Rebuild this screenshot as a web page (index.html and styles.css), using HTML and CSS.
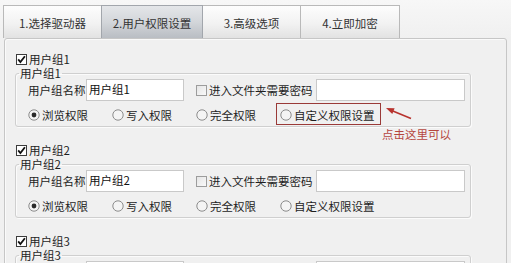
FILE: index.html
```html
<!DOCTYPE html>
<html>
<head>
<meta charset="utf-8">
<link rel="stylesheet" href="styles.css">
</head>
<body>
<div class="tabs">
  <div class="tab">1.选择驱动器</div>
  <div class="tab active">2.用户权限设置</div>
  <div class="tab">3.高级选项</div>
  <div class="tab">4.立即加密</div>
</div>
<div class="panel">
  <div class="group">
    <div class="gcheck"><svg class="cb" width="11" height="11" viewBox="0 0 11 11"><rect x="0.5" y="0.5" width="10" height="10" fill="#fff" stroke="#3c3c3c"/><path d="M2.2 5.4 L4.4 8 L8.9 2.2" fill="none" stroke="#111" stroke-width="1.8"/></svg><span>用户组1</span></div>
    <fieldset class="gbox">
      <legend>用户组1</legend>
      <div class="row1">
        <span class="lbl">用户组名称</span>
        <span class="inp name">用户组1</span>
        <span class="chk"><svg width="11" height="11" viewBox="0 0 11 11"><defs><linearGradient id="g1" x1="0" y1="0" x2="1" y2="1"><stop offset="0" stop-color="#e4e4e4"/><stop offset="1" stop-color="#fafafa"/></linearGradient></defs><rect x="0.5" y="0.5" width="10" height="10" fill="url(#g1)" stroke="#9c9c9c"/></svg><span>进入文件夹需要密码</span></span>
        <span class="inp pwd"></span>
      </div>
      <div class="row2">
        <span class="radio"><svg width="12" height="12" viewBox="0 0 12 12"><circle cx="6" cy="6" r="5.2" fill="#f4f4f4" stroke="#8c8c8c"/><circle cx="6" cy="6" r="2.4" fill="#2a2a2a"/></svg>浏览权限</span>
        <span class="radio"><svg width="12" height="12" viewBox="0 0 12 12"><circle cx="6" cy="6" r="5.2" fill="#f4f4f4" stroke="#8c8c8c"/></svg>写入权限</span>
        <span class="radio"><svg width="12" height="12" viewBox="0 0 12 12"><circle cx="6" cy="6" r="5.2" fill="#f4f4f4" stroke="#8c8c8c"/></svg>完全权限</span>
        <span class="radio last"><svg width="12" height="12" viewBox="0 0 12 12"><circle cx="6" cy="6" r="5.2" fill="#f4f4f4" stroke="#8c8c8c"/></svg>自定义权限设置</span>
      </div>
    </fieldset>
  </div>
  <div class="group">
    <div class="gcheck"><svg class="cb" width="11" height="11" viewBox="0 0 11 11"><rect x="0.5" y="0.5" width="10" height="10" fill="#fff" stroke="#3c3c3c"/><path d="M2.2 5.4 L4.4 8 L8.9 2.2" fill="none" stroke="#111" stroke-width="1.8"/></svg><span>用户组2</span></div>
    <fieldset class="gbox">
      <legend>用户组2</legend>
      <div class="row1">
        <span class="lbl">用户组名称</span>
        <span class="inp name">用户组2</span>
        <span class="chk"><svg width="11" height="11" viewBox="0 0 11 11"><rect x="0.5" y="0.5" width="10" height="10" fill="url(#g1)" stroke="#9c9c9c"/></svg><span>进入文件夹需要密码</span></span>
        <span class="inp pwd"></span>
      </div>
      <div class="row2">
        <span class="radio"><svg width="12" height="12" viewBox="0 0 12 12"><circle cx="6" cy="6" r="5.2" fill="#f4f4f4" stroke="#8c8c8c"/><circle cx="6" cy="6" r="2.4" fill="#2a2a2a"/></svg>浏览权限</span>
        <span class="radio"><svg width="12" height="12" viewBox="0 0 12 12"><circle cx="6" cy="6" r="5.2" fill="#f4f4f4" stroke="#8c8c8c"/></svg>写入权限</span>
        <span class="radio"><svg width="12" height="12" viewBox="0 0 12 12"><circle cx="6" cy="6" r="5.2" fill="#f4f4f4" stroke="#8c8c8c"/></svg>完全权限</span>
        <span class="radio last"><svg width="12" height="12" viewBox="0 0 12 12"><circle cx="6" cy="6" r="5.2" fill="#f4f4f4" stroke="#8c8c8c"/></svg>自定义权限设置</span>
      </div>
    </fieldset>
  </div>
  <div class="group">
    <div class="gcheck"><svg class="cb" width="11" height="11" viewBox="0 0 11 11"><rect x="0.5" y="0.5" width="10" height="10" fill="#fff" stroke="#3c3c3c"/><path d="M2.2 5.4 L4.4 8 L8.9 2.2" fill="none" stroke="#111" stroke-width="1.8"/></svg><span>用户组3</span></div>
    <fieldset class="gbox">
      <legend>用户组3</legend>
      <div class="row1">
        <span class="lbl">用户组名称</span>
        <span class="inp name">用户组3</span>
        <span class="chk"><svg width="11" height="11" viewBox="0 0 11 11"><rect x="0.5" y="0.5" width="10" height="10" fill="url(#g1)" stroke="#9c9c9c"/></svg><span>进入文件夹需要密码</span></span>
        <span class="inp pwd"></span>
      </div>
    </fieldset>
  </div>
  <div class="callout-box"></div>
  <svg class="arrow" width="30" height="22" viewBox="0 0 30 22"><line x1="26" y1="17.5" x2="6" y2="9.2" stroke="#b8332e" stroke-width="1.6"/><polygon points="1,7 9.6,7.3 7.3,12.9" fill="#b8332e"/></svg>
  <div class="callout-text">点击这里可以</div>
</div>
</body>
</html>
```

FILE: styles.css
```css
html, body {
  margin: 0;
  padding: 0;
}
body {
  background: #f0f0f0;
  font-family: "Noto Sans CJK SC", "Noto Sans", sans-serif;
  font-size: 11.5px;
  color: #1e1e1e;
  overflow: hidden;
  height: 263px;
}
svg {
  flex-shrink: 0;
  display: block;
}
.tabs {
  display: flex;
  height: 33px;
  padding-top: 5px;
  padding-left: 3px;
  background: linear-gradient(#f7f7f7, #f0f0f0);
}
.tab {
  box-sizing: border-box;
  height: 33px;
  width: 99px;
  border: 1px solid #b9b9b9;
  border-bottom: none;
  margin-right: -1px;
  background: linear-gradient(#fdfdfd, #f2f2f2 55%, #e2e2e2);
  display: flex;
  align-items: center;
  justify-content: center;
  color: #333;
  line-height: 14px;
  padding-top: 1px;
}
.tab:nth-child(1) { width: 99px; }
.tab:nth-child(2) { width: 102px; }
.tab:nth-child(3) { width: 99px; }
.tab:nth-child(4) { width: 100px; }
.tab.active {
  background: linear-gradient(#e4e6e9, #d3d6da 50%, #b9bdc3);
  border-color: #a2a6ac;
  position: relative;
  z-index: 1;
}
.panel {
  position: relative;
  margin: 0 4px;
  height: 240px;
  border: 1px solid #c6c6c6;
  border-radius: 3px;
  background: #f0f0f0;
  box-shadow: inset 1px 1px 0 #fafafa;
}
.group {
  margin-bottom: 16px;
}
.group:first-child {
  margin-top: 13px;
}
.gcheck {
  display: flex;
  align-items: center;
  height: 14px;
  line-height: 14px;
  padding-left: 11px;
  gap: 2px;
}
.gbox {
  margin: 1px 35px 0 10px;
  padding: 0;
  border: 1px solid #cfcfcf;
  border-radius: 3px;
  box-shadow: 1px 1px 0 #fbfbfb, inset 1px 1px 0 #fbfbfb;
  min-width: 0;
}
.gbox legend {
  margin-left: 3px;
  padding: 0 1px;
  line-height: 12px;
  height: 12px;
}
.row1 {
  display: flex;
  align-items: center;
  height: 22px;
  padding-left: 12px;
}
.lbl {
  width: 58px;
  line-height: 14px;
}
.inp {
  box-sizing: border-box;
  height: 22px;
  background: #fff;
  border: 1px solid #c9c9c9;
  line-height: 16px;
  padding: 1px 2px;
  color: #111;
}
.inp.name {
  width: 98px;
}
.chk {
  display: flex;
  align-items: center;
  gap: 2px;
  margin-left: 12px;
  width: 120px;
  line-height: 14px;
}
.inp.pwd {
  width: 149px;
}
.row2 {
  display: flex;
  align-items: center;
  height: 22px;
  margin-top: 3px;
  padding-left: 12px;
}
.radio {
  display: flex;
  align-items: center;
  gap: 2px;
  width: 84px;
  line-height: 14px;
  white-space: nowrap;
}
.radio.last {
  width: auto;
}
.callout-box {
  position: absolute;
  left: 271px;
  top: 64px;
  width: 103px;
  height: 20px;
  border: 1px solid #9a3a38;
}
.arrow {
  position: absolute;
  left: 380px;
  top: 62px;
}
.callout-text {
  position: absolute;
  left: 377px;
  top: 88px;
  line-height: 14px;
  color: #b5473f;
  font-size: 11.5px;
}
```
